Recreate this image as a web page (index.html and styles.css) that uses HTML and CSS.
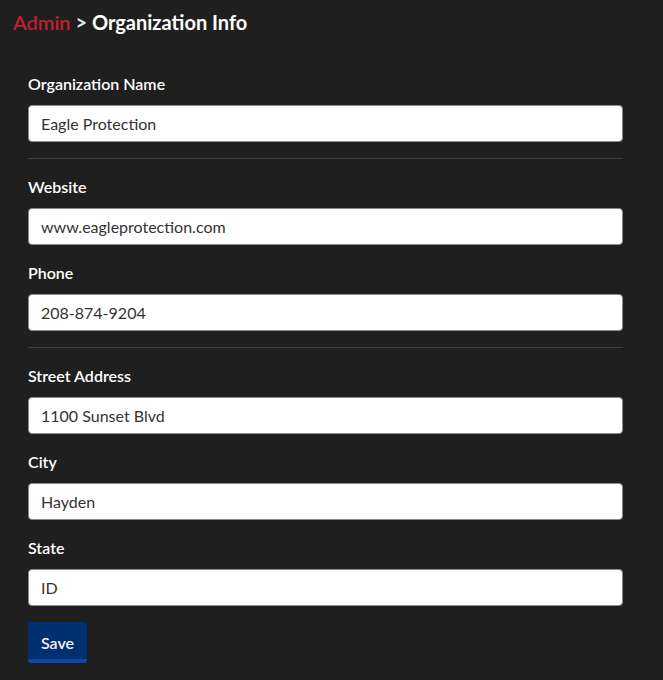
FILE: index.html
```html
<!DOCTYPE html>
<html lang="en">

<head>
    <meta charset="UTF-8">
    <meta name="viewport" content="width=device-width, initial-scale=1.0">
    <title>Organization Info</title>
    <link rel="stylesheet" href="styles.css">
</head>

<body>
    <h1 class="crumbs"><span class="crumb-link">Admin</span> <span class="crumb-sep">&gt;</span> Organization Info</h1>

    <form class="org-form">
        <!-- name -->
        <label class="form-row">
            <span class="form-label">Organization Name</span>
            <input type="text" value="Eagle Protection">
        </label>

        <hr class="divider">

        <!-- contact -->
        <label class="form-row">
            <span class="form-label">Website</span>
            <input type="text" value="www.eagleprotection.com">
        </label>

        <label class="form-row">
            <span class="form-label">Phone</span>
            <input type="text" value="208-874-9204">
        </label>

        <hr class="divider">

        <!-- address -->
        <label class="form-row">
            <span class="form-label">Street Address</span>
            <input type="text" value="1100 Sunset Blvd">
        </label>

        <label class="form-row">
            <span class="form-label">City</span>
            <input type="text" value="Hayden">
        </label>

        <label class="form-row">
            <span class="form-label">State</span>
            <input type="text" value="ID">
        </label>

        <div class="actions">
            <button type="button">Save</button>
        </div>
    </form>
</body>

</html>
```

FILE: styles.css
```css
* {
    box-sizing: border-box;
    margin: 0;
    padding: 0;
}

body {
    background-color: #1f1f1f;
    color: #fff;
    font-family: Lato, 'Noto Sans', sans-serif;
    padding: 10px 13px;
}

.crumbs {
    font-size: 20px;
    font-weight: 700;
    line-height: 24px;
}

.crumb-link {
    color: #c0202f;
    font-weight: 600;
}

.crumb-sep {
    color: #e6e6e6;
}

.org-form {
    display: flex;
    flex-direction: column;
    gap: 18px;
    padding: 40px 27px 0 15px;
}

.form-row {
    display: flex;
    flex-direction: column;
    gap: 11px;
}

.form-label {
    font-size: 16px;
    font-weight: 600;
    line-height: 20px;
}

.form-row input {
    height: 37px;
    width: 100%;
    border: 1px solid #8a8a8a;
    border-radius: 4px;
    padding: 0 12px;
    font-family: Lato, 'Noto Sans', sans-serif;
    font-size: 16px;
    color: #333;
    background-color: #fff;
}

.divider {
    border: none;
    border-top: 1px solid #3d3d3d;
    margin-top: -2px;
}

.actions {
    margin-top: -2px;
}

button {
    width: 59px;
    height: 41px;
    border: none;
    border-bottom: 4px solid #0a47a8;
    border-radius: 3px;
    background-color: #003070;
    color: #f0f0f0;
    font-family: Lato, 'Noto Sans', sans-serif;
    font-size: 16px;
    font-weight: 600;
    padding-top: 4px;
}
```
